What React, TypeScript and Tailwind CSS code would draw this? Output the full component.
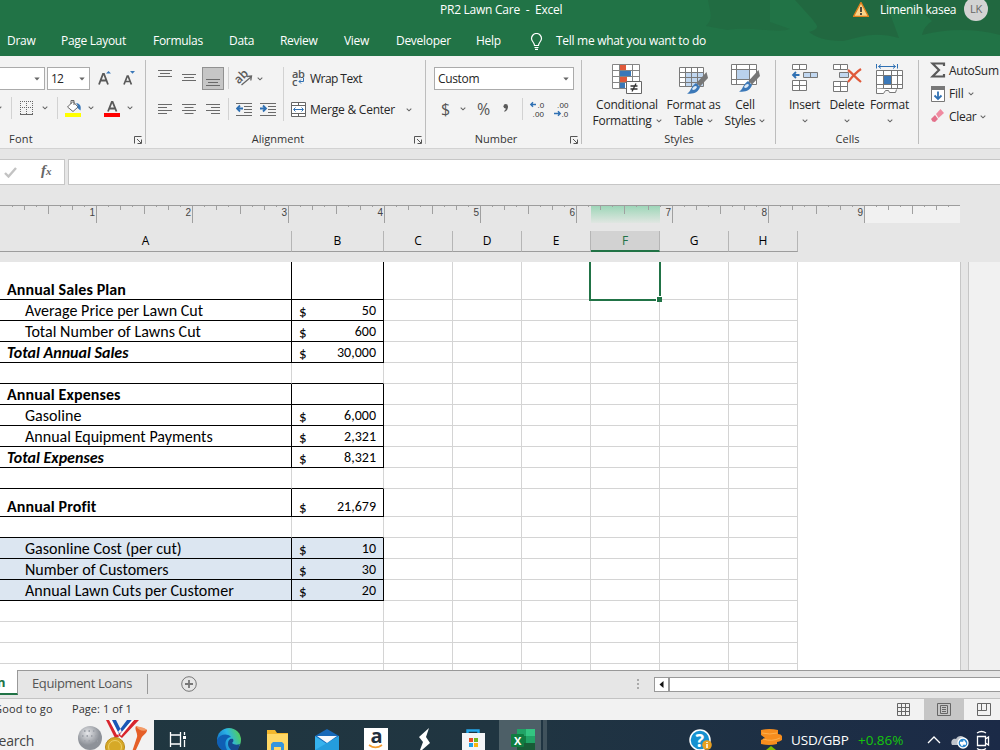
import type { ReactNode } from "react";

const tabs = ["Draw", "Page Layout", "Formulas", "Data", "Review", "View", "Developer", "Help"];

type Row = {
  label?: string;
  value?: string;
  kind?: "bold" | "total" | "item";
  fill?: boolean;
  height?: string;
  box?: boolean;
  under?: boolean;
};

const rows: Row[] = [
  { label: "Annual Sales Plan", kind: "bold", height: "h-[38px]", box: true },
  { label: "Average Price per Lawn Cut", value: "50", kind: "item", box: true },
  { label: "Total Number of Lawns Cut", value: "600", kind: "item", box: true },
  { label: "Total Annual Sales", value: "30,000", kind: "total", box: true },
  { under: true },
  { label: "Annual Expenses", kind: "bold", box: true },
  { label: "Gasoline", value: "6,000", kind: "item", box: true },
  { label: "Annual Equipment Payments", value: "2,321", kind: "item", box: true },
  { label: "Total Expenses", value: "8,321", kind: "total", box: true },
  { under: true },
  { label: "Annual Profit", value: "21,679", kind: "bold", height: "h-[28px]", box: true },
  { under: true },
  { label: "Gasonline Cost (per cut)", value: "10", kind: "item", box: true, fill: true },
  { label: "Number of Customers", value: "30", kind: "item", box: true, fill: true },
  { label: "Annual Lawn Cuts per Customer", value: "20", kind: "item", box: true, fill: true },
  {},
  {},
  {},
  {},
];

const labelStyle = {
  bold: "pl-[7px] font-bold tracking-[0.1px]",
  total: "pl-[7px] font-bold italic",
  item: "pl-[25px] tracking-[0.03px]",
};

function Chevron({ className = "" }: { className?: string }) {
  return (
    <svg viewBox="0 0 6 4" className={`h-1 w-1.5 shrink-0 ${className}`} fill="none" stroke="#666" strokeWidth="1.1">
      <path d="M.7.7 3 2.800 5.300.7" />
    </svg>
  );
}

function Caret({ className = "" }: { className?: string }) {
  return (
    <svg viewBox="0 0 6 4" className={`h-1 w-1.5 shrink-0 ${className}`} fill="#666">
      <path d="M.3.5h5.400L3 3.500z" />
    </svg>
  );
}

function Sep({ className = "" }: { className?: string }) {
  return <div className={`h-[22px] w-px shrink-0 bg-[#d2d2d2] ${className}`} />;
}

function Lines({ d, className = "" }: { d: string; className?: string }) {
  return (
    <svg viewBox="0 0 14 24" className={`h-6 w-3.5 shrink-0 ${className}`} stroke="#6a6a6a" fill="none">
      <path d={d} />
    </svg>
  );
}

function Launcher() {
  return (
    <svg viewBox="0 0 8 8" className="absolute right-1 bottom-1 h-2 w-2" fill="none" stroke="#555">
      <path d="M.5 7.500V.5H7.500M3 3l4 4M7.500 3.500v4h-4" />
    </svg>
  );
}

function Group({ label, width, launcher, children }: { label: string; width: string; launcher?: boolean; children: ReactNode }) {
  return (
    <div className={`relative flex shrink-0 flex-col ${width}`}>
      <div className="h-[75px]">{children}</div>
      <div className="flex h-[19px] items-center justify-center text-[11px] text-[#333]">{label}</div>
      {launcher && <Launcher />}
      <div className="absolute top-1 right-0 h-[84px] w-px bg-[#bdbdbd]" />
    </div>
  );
}

function FontGroup() {
  return (
    <div className="relative flex w-[146px] shrink-0 flex-col">
      <div className="mt-[11px] flex h-6">
        <div className="flex h-[23px] w-[45px] items-center justify-end border border-l-0 border-[#ababab] bg-white pr-1">
          <Caret />
        </div>
        <div className="ml-0.5 flex h-[23px] w-[43px] items-center justify-between border border-[#ababab] bg-white pr-1 pl-[3px]">
          <span className="tracking-[-0.8px]">12</span>
          <Caret />
        </div>
        <svg viewBox="0 0 14 20" className="ml-2 h-5 w-3.5" fill="none">
          <path d="M1 17.500 5 7h1l4 10.500M2.500 13.500h6" stroke="#595959" strokeWidth="1.8" />
          <path d="M8 6.500 10.500 4 13 6.500z" fill="#3b78b8" />
        </svg>
        <svg viewBox="0 0 14 20" className="ml-[11px] h-5 w-3.5" fill="none">
          <path d="M1 17.500 4.300 9h.8l3.300 8.500M2.300 14.500h5" stroke="#595959" strokeWidth="1.700" />
          <path d="M7 4h5l-2.500 2.700z" fill="#3b78b8" />
        </svg>
      </div>
      <div className="mt-[6px] flex h-6 items-center">
        <Chevron className="-ml-1" />
        <Sep className="ml-[9px]" />
        <svg viewBox="0 0 14 14" className="ml-2 h-3.5 w-3.5" stroke="#666" fill="none" shapeRendering="crispEdges">
          <path d="M0 .5h14M0 6.500h14M.5 0v14M6.500 0v14M12.500 0v14" strokeDasharray="1 1" />
          <path d="M0 13.500h13" />
        </svg>
        <Chevron className="ml-2" />
        <Sep className="ml-[9px]" />
        <svg viewBox="0 0 18 18" className="ml-[7px] h-[18px] w-[18px]" fill="none">
          <path d="m2.500 8 5.500-5.500L13 8l-5 4.500zM6 5V1.500h3V6" stroke="#666" fill="#fff" />
          <path d="M11 4c4 .5 5.500 3 4.500 7.500L12.500 9c.5-2 0-3-1.500-5z" fill="#3b78b8" />
          <path d="M0 14h16v4H0z" fill="#ff0" />
        </svg>
        <Chevron className="ml-[5px]" />
        <svg viewBox="0 0 16 18" className="ml-[10px] h-[18px] w-4" fill="none">
          <path d="M4 12.500 7.800 3h.8l3.900 9.500M5.300 9.500h6" stroke="#595959" strokeWidth="1.800" />
          <path d="M0 14h16v4H0z" fill="#f00" />
        </svg>
        <Chevron className="ml-[7px]" />
      </div>
      <div className="mt-[10px] flex h-[19px] items-center pl-[9px] text-[11px] tracking-[0.25px] text-[#333]">Font</div>
      <Launcher />
      <div className="absolute top-1 right-0 h-[84px] w-px bg-[#bdbdbd]" />
    </div>
  );
}

function AlignmentGroup() {
  return (
    <Group label="Alignment" width="w-[280px] [&>div:nth-child(2)]:pr-4" launcher>
      <div className="flex pt-[11px] pl-3">
        <div className="w-[125px]">
          <div className="flex h-6">
            <Lines d="M0 3.500h14M2 6.500h10M0 9.500h14" />
            <Lines className="ml-2.5" d="M0 7.500h14M2 10.500h10M0 13.500h14" />
            <div className="ml-1.5 h-[23px] w-[22px] border border-[#919191] bg-[#c6c6c6]">
              <Lines className="ml-[3px] -mt-px" d="M0 12.500h14M2 15.500h10M0 18.500h14" />
            </div>
            <Sep className="ml-1" />
            <svg viewBox="0 0 18 18" className="mt-0.5 ml-[7px] h-[18px] w-[18px] overflow-visible">
              <text x="-1.500" y="11" transform="rotate(-45 6 8)" fontSize="12" fontWeight="600" fill="#595959">ab</text>
              <path d="m5.500 16 9.500-8M11 7.500l4.500-.5-.7 4.500" fill="none" stroke="#666" strokeWidth="1.300" />
            </svg>
            <Chevron className="mt-2.5 ml-[3px]" />
          </div>
          <div className="mt-[6px] flex h-6 items-center">
            <Lines d="M0 7.500h14M0 10.500h9M0 13.500h14M0 16.500h9" />
            <Lines className="ml-2.5" d="M0 7.500h14M2.500 10.500h9M0 13.500h14M2.500 16.500h9" />
            <Lines className="ml-2.5" d="M0 7.500h14M5 10.500h9M0 13.500h14M5 16.500h9" />
            <Sep className="ml-2" />
            <svg viewBox="0 0 16 14" className="-mt-px ml-[7px] h-3.5 w-4" fill="none" stroke="#6a6a6a">
              <path d="M0 1.500h16M8 4.500h8M8 7.500h8M8 10.500h8M0 13.500h16" />
              <path d="M7 6.500H1.500M4 3.500l-3 3 3 3" stroke="#2f70b3" strokeWidth="1.800" />
            </svg>
            <svg viewBox="0 0 16 14" className="-mt-px ml-2 h-3.5 w-4" fill="none" stroke="#6a6a6a">
              <path d="M0 1.500h16M8 4.500h8M8 7.500h8M8 10.500h8M0 13.500h16" />
              <path d="M0 6.500h5.500M3 3.500l3 3-3 3" stroke="#2f70b3" strokeWidth="1.800" />
            </svg>
          </div>
        </div>
        <div className="h-[54px] w-px bg-[#d2d2d2]" />
        <div className="pl-[7px]">
          <div className="flex h-6 items-center">
            <div className="relative flex h-[18px] w-3.5 flex-col pl-px text-[11px] leading-[8px] font-semibold tracking-[-0.5px] text-[#555]">
              <span>ab</span>
              <span>c</span>
              <svg viewBox="0 0 6 6" className="absolute right-px bottom-1 h-1.5 w-1.5" fill="none" stroke="#2f70b3">
                <path d="M5.500 0v3.500H1M3 1.500l-2 2 2 2" />
              </svg>
            </div>
            <span className="ml-[5px] tracking-[-0.55px]">Wrap Text</span>
          </div>
          <div className="mt-[6px] flex h-[25px] items-center">
            <svg viewBox="0 0 15 15" className="h-[15px] w-[15px]" fill="#fff" stroke="#666">
              <path d="M.5.5h14v14H.5zM.5 3.500h14M.5 11.500h14M7.500.5v3M7.500 11.500v3" />
              <path d="M3 7.500h9M4.500 5.500l-2 2 2 2M10.500 5.500l2 2-2 2" fill="none" stroke="#2f70b3" />
            </svg>
            <span className="ml-1 w-[85px] pt-px tracking-[-0.23px] whitespace-nowrap">Merge &amp; Center</span>
            <Chevron className="ml-[11px]" />
          </div>
        </div>
      </div>
    </Group>
  );
}

function NumberGroup() {
  return (
    <Group label="Number" width="w-[156px] [&>div:nth-child(2)]:pr-4" launcher>
      <div className="px-2 pt-[11px]">
        <div className="flex h-[23px] w-[140px] items-center justify-between border border-[#ababab] bg-white pr-1 pl-[3px]">
          <span className="tracking-[-0.35px]">Custom</span>
          <Caret />
        </div>
        <div className="mt-[7px] flex h-6 items-center pl-[7px] text-[#555]">
          <span className="w-[11px] text-[16px]">$</span>
          <Chevron className="ml-2" />
          <span className="ml-[11px] w-[14px] text-[16px] tracking-[-0.5px]">%</span>
          <svg viewBox="0 0 6 8" className="-mt-0.5 ml-3 h-2 w-1.5" fill="#5a5a5a">
            <circle cx="2.700" cy="2.300" r="2.200" />
            <path d="M4.900 2c.3 3-1 5-3.400 5.800l-.4-.8C2.500 6 3 5 2.800 3.500z" />
          </svg>
          <Sep className="ml-[13px]" />
          <svg viewBox="0 0 16 18" className="ml-[7px] h-[18px] w-4 overflow-visible font-['Liberation_Sans',sans-serif]" fill="#333" fontSize="8">
            <text x="7.500" y="8">.0</text>
            <text x="2.500" y="17" textLength="11.500">.00</text>
            <path d="M6 4.500H1M3 2.200.8 4.500 3 6.800" fill="none" stroke="#2f70b3" strokeWidth="1.400" />
          </svg>
          <svg viewBox="0 0 16 18" className="ml-2 h-[18px] w-4 overflow-visible font-['Liberation_Sans',sans-serif]" fill="#333" fontSize="8">
            <text x="3" y="8" textLength="11.500">.00</text>
            <text x="7.500" y="17">.0</text>
            <path d="M0 13.500h6M4 11.200l2.200 2.300L4 15.800" fill="none" stroke="#2f70b3" strokeWidth="1.400" />
          </svg>
        </div>
      </div>
    </Group>
  );
}

function Brush() {
  return (
    <>
      <path d="m28.500 8 1.500 6-8 8.500-3.500-3.500z" fill="#777" />
      <path d="m18 19 4 4c-1.500 5-6 7.500-13 6.500 4-1.500 3.500-7 9-10.500z" fill="#3b78b8" />
      <path d="M14 25c1-2 2-3 4-3l1 1c-1 2-2 3-4 3z" fill="#dce9f6" />
    </>
  );
}

function BigButton({ icon, lines, width }: { icon: ReactNode; lines: [string, string?]; width: string }) {
  return (
    <div className={`flex shrink-0 flex-col items-center ${width}`}>
      <div className="h-[33px]">{icon}</div>
      <span className="h-4 text-center leading-4 tracking-[-0.2px] whitespace-nowrap">{lines[0]}</span>
      <span className="flex h-4 items-center gap-1 leading-4 tracking-[-0.25px] whitespace-nowrap">
        {lines[1]}
        <Chevron />
      </span>
    </div>
  );
}

function StylesGroup() {
  return (
    <Group label="Styles" width="w-[194px]">
      <div className="flex pt-2 pl-[7px]">
        <BigButton
          width="w-[76px]"
          lines={["Conditional", "Formatting"]}
          icon={
            <svg viewBox="0 0 30 31" className="h-[31px] w-[30px]" fill="#fff" stroke="#858585">
              <path d="M.5.5h27v24H.5z" />
              <path d="M8 1h6v6H8zM8 13h7v6H8z" fill="#e0593a" stroke="none" />
              <path d="M8 7h11v6H8zM8 19h5v5H8z" fill="#3b78b8" stroke="none" />
              <path d="M.5 6.500h27M.5 12.500h27M.5 18.500h27M7.500.5v24M20.500.5v24" fill="none" />
              <path d="M14.500 17.500h15v12h-15z" stroke="#666" />
              <path d="M18.500 22h7M18.500 25h7M24 19.500l-4 8" stroke="#333" fill="none" strokeWidth="1.300" />
            </svg>
          }
        />
        <BigButton
          width="w-[57px]"
          lines={["Format as", "Table"]}
          icon={
            <svg viewBox="0 0 31 31" className="h-[31px] w-[31px]" fill="#fff" stroke="#7a7a7a">
              <path d="M1.500 3.500h24v19h-24z" />
              <path d="M8 9h17v13H8z" fill="#c1d7f0" stroke="none" />
              <path d="M1.500 8.500h24M1.500 13.500h24M1.500 18.500h24M7.500 3.500v19M13.500 3.500v19M19.500 3.500v19" fill="none" />
              <g stroke="none"><Brush /></g>
            </svg>
          }
        />
        <BigButton
          width="w-[46px]"
          lines={["Cell", "Styles"]}
          icon={
            <svg viewBox="0 0 31 31" className="h-[31px] w-[31px]" fill="#fff" stroke="#7a7a7a">
              <path d="M1.500.5h25v20h-25zM1.500 5.500h25M1.500 15.500h25M6.500.5v20M19.500.5v20" />
              <path d="M7 6h12v9H7z" fill="#b9d1ec" stroke="none" />
              <g stroke="none" transform="translate(0 -2)"><Brush /></g>
            </svg>
          }
        />
      </div>
    </Group>
  );
}

function CellsGroup() {
  return (
    <Group label="Cells" width="w-[143px]">
      <div className="flex pt-2 pl-[7px]">
        <BigButton
          width="w-[43px]"
          lines={["Insert"]}
          icon={
            <svg viewBox="0 0 28 30" className="h-[30px] w-7" fill="#fff" stroke="#777">
              <path d="M1.500.5h14v5h-14zM8.500.5v5M1.500 16.500h14v10h-14zM1.500 21.500h14M8.500 16.500v10" />
              <path d="M12.500 8.500h14v5h-14zM19.500 8.500v5" fill="#c1d7f0" />
              <path d="M8.500 11H2M5 8l-3 3 3 3" fill="none" stroke="#2f70b3" strokeWidth="1.800" />
            </svg>
          }
        />
        <BigButton
          width="w-[42px]"
          lines={["Delete"]}
          icon={
            <svg viewBox="0 0 30 30" className="h-[30px] w-[30px]" fill="#fff" stroke="#777">
              <path d="M1.500.5h14v5h-14zM8.500.5v5M1.500 17.500h14v10h-14zM1.500 22.500h14M8.500 17.500v10" />
              <path d="M7.500 8.500h9v5h-9z" fill="#c1d7f0" />
              <path d="M16 6c4 3 8 8 13 12M29 5c-6 4-9 8-13 13" fill="none" stroke="#e0593a" strokeWidth="2.200" />
            </svg>
          }
        />
        <BigButton
          width="w-[43px]"
          lines={["Format"]}
          icon={
            <svg viewBox="0 0 30 31" className="h-[31px] w-[30px]" fill="#fff" stroke="#777">
              <path d="M1.500 6.500h26v18h-26zM1.500 11.500h26M1.500 20.500h26M8.500 6.500v18M16.500 6.500v18M22.500 6.500v18" />
              <path d="M1.500 24.500v5h7l2-3h3l1 2h6l1-3" />
              <path d="M9 12h7v8H9z" fill="#3b78b8" stroke="none" />
              <path d="M1.500-.5v5M22.500-.5v5M3.500 2.500h17M6 .5l-2.500 2L6 4.500M18 .5l2.500 2-2.500 2" fill="none" stroke="#2f70b3" />
            </svg>
          }
        />
      </div>
    </Group>
  );
}

function EditingGroup() {
  return (
    <div className="w-[81px] overflow-hidden pt-[3px] pl-[11px] whitespace-nowrap">
      <div className="flex h-[23px] items-center">
        <svg viewBox="0 0 16 16" className="-mt-0.5 h-4 w-4 shrink-0" fill="none" stroke="#595959" strokeWidth="2.200">
          <path d="M14 4V1.500H2.500L9 8l-6.500 6.500H14V12" />
        </svg>
        <span className="ml-[3px] tracking-[-0.25px]">AutoSum</span>
      </div>
      <div className="flex h-[23px] items-center">
        <svg viewBox="0 0 15 16" className="ml-px h-4 w-[15px]" fill="#fff" stroke="#777">
          <path d="M.5.5h13v15H.5z" />
          <path d="M0 0h14v4H0z" fill="#777" stroke="none" />
          <path d="M7 5.500v7.500M3.500 9.500 7 13l3.500-3.500" fill="none" stroke="#2f70b3" strokeWidth="1.800" />
        </svg>
        <span className="ml-[3px] tracking-[-0.2px]">Fill</span>
        <Chevron className="ml-[5px]" />
      </div>
      <div className="flex h-[23px] items-center">
        <svg viewBox="0 0 15 14" className="-mt-px ml-px h-3.5 w-[15px]">
          <path d="m5 5 4.500-5L13 4 7.500 9z" fill="#ef8aa0" />
          <path d="m4 6 3 4-3 3-2.500-.5L0 10z" fill="#e3708a" />
        </svg>
        <span className="ml-[3px] tracking-[-0.3px]">Clear</span>
        <Chevron className="ml-1" />
      </div>
    </div>
  );
}

function TitleArea() {
  return (
    <header className="relative h-14 bg-[#217346] text-white">
      <svg viewBox="0 0 300 56" className="absolute top-0 right-0 h-14 w-[300px]" fill="#21673f">
        <path d="M8 0h62v22l20 7c-12 5-40-3-62 1l-22-4c8-8 4-14 2-26z" opacity=".6" />
        <path d="M95 0h90l14 38c-26-7-36-1-56 3-18 0-28-4-34-9 14-4 6-8 4-12z" opacity=".9" />
        <path d="M208 0h92v35c-24-6-50-7-78 0 2-8 6-11 10-14z" opacity=".9" />
      </svg>
      <div className="relative flex h-5 items-center">
        <span className="ml-[440px] w-[413px] tracking-[-0.25px] whitespace-pre">PR2 Lawn Care  -  Excel</span>
        <svg viewBox="0 0 16 15" className="-mt-0.5 h-[15px] w-4">
          <path d="M8 .5 15.500 14.500H.5z" fill="#f9d48a" stroke="#e0811d" strokeWidth="1.400" />
          <path d="M8 5v5M8 11v2" stroke="#333" strokeWidth="1.700" />
        </svg>
        <span className="ml-[11px] w-[75px] tracking-[-0.3px] whitespace-nowrap">Limenih kasea</span>
        <div className="-mt-0.5 ml-[9px] flex h-6 w-6 items-center justify-center rounded-full bg-[#d3d3d3] text-[11px] tracking-[-0.2px] text-[#666]">
          LK
        </div>
      </div>
      <nav className="relative grid h-[42px] grid-cols-[54px_92px_76px_51px_64px_52px_80px_54px_26px_1fr] items-center pl-[7px] tracking-[-0.29px] whitespace-nowrap">
        {tabs.map((tab) => (
          <span key={tab}>{tab}</span>
        ))}
        <svg viewBox="0 0 13 17" className="h-[17px] w-[13px]" fill="none" stroke="#fff" strokeWidth="1.200">
          <path d="M4.500 12.500c0-3-3-4-3-7a5 5 0 0 1 10 0c0 3-3 4-3 7zM4.500 14.500h4M5 16.300h3" />
        </svg>
        <span>Tell me what you want to do</span>
      </nav>
    </header>
  );
}

function FormulaBar() {
  return (
    <div className="flex h-[26px]">
      <div className="flex w-[65px] items-center border border-l-0 border-[#c6c6c6] bg-white">
        <svg viewBox="0 0 13 11" className="ml-1 h-[11px] w-[13px]" fill="none" stroke="#c3c3c3" strokeWidth="2.400">
          <path d="m1 6 3.500 3.500L12 1" />
        </svg>
        <span className="-mt-1 ml-6 font-['Liberation_Serif',serif] text-[15px] font-bold text-[#666] italic">
          f<span className="text-[11px]">x</span>
        </span>
      </div>
      <div className="ml-[3px] flex-1 border border-r-0 border-[#c6c6c6] bg-white" />
    </div>
  );
}

function Ruler() {
  return (
    <div className="relative flex h-[18px] w-[960px] border-t border-[#9d9d9d]">
      <div className="absolute top-0 left-[591px] h-[17px] w-[69px] bg-linear-to-b from-[#9dd6b8] to-[#e0e6e2]" />
      <div className="absolute top-0 left-[865px] h-[17px] w-[95px] bg-[#f1f1f1]" />
      {Array.from({ length: 80 }, (_, i) => i + 1).map((n) => (
        <div key={n} className="relative flex w-3 translate-x-px justify-end">
          {n % 8 === 0 && n < 80 && (
            <span className="absolute right-0.5 font-['Liberation_Sans',sans-serif] text-[10px] leading-[13px] text-[#444]">{n / 8}</span>
          )}
          <div
            className={`w-px shrink-0 bg-[#a0a0a0] ${
              n === 80 ? "h-0" : n % 8 === 0 ? "h-[17px]" : n % 4 === 0 ? "h-2" : n % 2 === 0 ? "h-1" : "h-px"
            }`}
          />
        </div>
      ))}
    </div>
  );
}

const columns = "grid grid-cols-[292px_92px_repeat(6,69px)]";

function ColumnHeads() {
  return (
    <div className={`${columns} mt-2 h-5 w-[798px] text-center leading-[19px] text-black`}>
      {"ABCDEFGH".split("").map((c) => (
        <div
          key={c}
          className={
            c === "F"
              ? "border-r border-b-2 border-r-[#b5b5b5] border-b-[#217346] bg-[#d2d2d2] text-[#217346]"
              : "border-r border-b border-r-[#b5b5b5] border-b-[#9d9d9d]"
          }
        >
          {c}
        </div>
      ))}
    </div>
  );
}

function Sheet() {
  return (
    <div className="mt-[11px] flex h-[408px]">
      <div className="h-full w-[961px] overflow-hidden border-r border-[#c6c6c6] bg-white font-[Carlito,Lato,sans-serif] text-[16px] text-black">
        {rows.map((row, i) => {
          const fill = row.fill ? "bg-[#dce6f1]" : "";
          const edge = row.box ? "border-black" : row.under ? "border-r-[#d4d4d4] border-b-black" : "border-[#d4d4d4]";
          return (
            <div key={i} className={`${columns} ${row.height ?? "h-[21px]"} w-[798px]`}>
              <div className={`flex items-end border-r border-b leading-[18px] whitespace-nowrap ${edge} ${fill} ${row.kind ? labelStyle[row.kind] : ""}`}>
                {row.label}
              </div>
              <div className={`flex items-end justify-between border-r border-b pr-[7px] pl-[7px] leading-[18px] ${edge} ${fill}`}>
                {row.value && (
                  <>
                    <span className="text-[15px]">$</span>
                    <span className="text-[14px]">{row.value}</span>
                  </>
                )}
              </div>
              {["C", "D", "E", "F", "G", "H"].map((c) => (
                <div key={c} className="relative border-r border-b border-[#d4d4d4]">
                  {c === "F" && i === 0 && (
                    <div className="absolute top-0 -right-0.5 -bottom-0.5 -left-0.5 z-10 border-2 border-t-0 border-[#217346]">
                      <div className="absolute -right-[3px] -bottom-[3px] h-1.5 w-1.5 border-t border-l border-white bg-[#217346]" />
                    </div>
                  )}
                </div>
              ))}
            </div>
          );
        })}
      </div>
      <div className="w-2 border-r border-[#c6c6c6]" />
      <div className="flex-1 bg-[#f1f1f1]" />
    </div>
  );
}

function SheetTabs() {
  return (
    <div className="flex h-[29px] border-t border-b border-t-[#999] border-b-[#c3c3c3]">
      <div className="-mt-px flex h-[25px] w-[18px] items-center overflow-hidden border-r border-b-2 border-r-[#999] border-b-[#217346] bg-white text-[13px] font-bold text-[#217346]">
        <span className="-ml-[3px]">n</span>
      </div>
      <span className="ml-3.5 w-[115px] text-[13px] leading-[25px] tracking-[-0.38px] whitespace-nowrap text-[#555]">Equipment Loans</span>
      <div className="mt-[3px] h-5 w-px bg-[#999]" />
      <svg viewBox="0 0 16 16" className="mt-[5px] ml-[33px] h-4 w-4" fill="none" stroke="#777">
        <circle cx="8" cy="8" r="7.300" />
        <path d="M8 4v8M4 8h8" strokeWidth="1.800" />
      </svg>
      <div className="mt-2 ml-[440px] flex h-2.5 w-0.5 flex-col justify-between">
        <div className="h-0.5 bg-[#aaa]" />
        <div className="h-0.5 bg-[#aaa]" />
        <div className="h-0.5 bg-[#aaa]" />
      </div>
      <div className="mt-1.5 ml-[15px] flex h-[15px] flex-1 border border-r-0 border-[#999] bg-white">
        <svg viewBox="0 0 13 13" className="h-[13px] w-[13px]">
          <path d="M8.500 3v7l-4-3.500z" fill="#111" />
        </svg>
        <div className="w-0.5 bg-[#999]" />
      </div>
    </div>
  );
}

function StatusBar() {
  return (
    <div className="flex h-[21px] items-center bg-[#f2f2f2] text-[11px] text-[#333]">
      <span className="-ml-[6px] w-[78px] pb-px tracking-[0.2px] whitespace-nowrap">Good to go</span>
      <span className="w-[823px] pb-px tracking-[0.05px]">Page: 1 of 1</span>
      <svg viewBox="0 0 13 13" className="ml-[2px] h-[13px] w-[13px]" fill="none" stroke="#666">
        <path d="M.5.5h12v12H.5zM.5 4.500h12M.5 8.500h12M4.500.5v12M8.500.5v12" />
      </svg>
      <div className="ml-[14px] flex h-[21px] w-10 items-center justify-center bg-[#c6c6c6]">
        <svg viewBox="0 0 14 13" className="h-[13px] w-3.5" fill="none" stroke="#666">
          <path d="M.5.5h13v12H.5zM3.500 2.500h7v8h-7zM5 4.500h4M5 6.500h4M5 8.500h4" />
        </svg>
      </div>
      <svg viewBox="0 0 14 13" className="ml-[13px] h-[13px] w-3.5" fill="none" stroke="#666">
        <path d="M.5.5h13v12H.5zM4.500.5v7M9.500.5v7M.5 7.500h9" />
      </svg>
    </div>
  );
}

function Taskbar() {
  return (
    <div className="flex h-[30px] overflow-hidden bg-linear-to-r from-[#203740] via-[#203541] to-[#1b2a47] text-white">
      <div className="flex w-[154px] bg-[#f2f2f2] text-[#444]">
        <span className="-ml-[9px] w-[87px] pt-[13px] text-[14px] tracking-[-0.2px]">Search</span>
        <svg viewBox="0 0 76 30" className="h-[30px] w-[76px] shrink-0">
          <defs>
            <radialGradient id="ball" cx=".4" cy=".3">
              <stop offset="0" stopColor="#e6e7ea" />
              <stop offset="1" stopColor="#8e9299" />
            </radialGradient>
          </defs>
          <circle cx="12" cy="18" r="12" fill="url(#ball)" />
          <path d="M6 11h13M4 16h17M6 21h14" stroke="#a0a4ab" strokeWidth="2" strokeDasharray="1.500 3" />
          <path d="m28 0 9 18 4-1L32 0zM61 0 44 18l-4-3L56 0z" fill="#d8262e" />
          <path d="m31 0 8 15 2-2-6-13z" fill="#fff" />
          <path d="m34 0 7 14 3-2-6-12zM54 0 43 14l-3-2L49 0z" fill="#1b57b5" />
          <path d="M56 0 43 16l-1-2L54 0z" fill="#fff" />
          <circle cx="37" cy="27" r="9.500" fill="#d6a927" stroke="#b98916" />
          <circle cx="37" cy="27" r="6.500" fill="none" stroke="#eed06a" />
          <path d="M58 6c5 3 5 1 11 4 0 4-5 5-6 9l-6 13h-3l5-15c1-4-3-7-1-11z" fill="#e55f28" />
          <path d="M58 6c4 1 8 1 11 4-4 2-9 0-11-4z" fill="#f39b68" />
        </svg>
      </div>
      <svg viewBox="0 0 346 30" className="h-[30px] w-[346px] shrink-0">
        <defs>
          <linearGradient id="edge" x1="0" y1=".6" x2="1" y2=".2">
            <stop offset="0" stopColor="#1273c6" />
            <stop offset=".5" stopColor="#2bb4e6" />
            <stop offset="1" stopColor="#57d04b" />
          </linearGradient>
        </defs>
        <path d="M16.500 12v3h10v-3M16.500 27v-3h10v3M16.500 15v9M26.500 15v9M30.500 12v3M30.500 20v7" fill="none" stroke="#fff" strokeWidth="1.300" />
        <path d="M29 16h3v3h-3z" fill="#fff" />
        <circle cx="75" cy="20" r="12" fill="url(#edge)" />
        <path d="M63 20c3-6 10-7 14-3-6 1-7 7-4 13h-5c-4-3-5-6-5-10z" fill="#0f5fb4" />
        <path d="M74 24c0-4 2-6 5-5 1 2 0 3-1 4 2 2 5 2 8 1l-2 6h-7c-2-2-3-4-3-6z" fill="#16498f" />
        <path d="M113 10h8l2 3h11v17h-21z" fill="#f3b72d" />
        <path d="M113 14h21v16h-21z" fill="#ffd765" />
        <path d="M117 30v-6l2-2h9l2 2v6z" fill="#3595dc" />
        <path d="M120 27h7v3h-7z" fill="#ffd765" />
        <path d="m161 16 12-7 12 7v14h-24z" fill="#1668b8" />
        <path d="m161 16 12 8 12-8v14h-24z" fill="#35b2ee" />
        <path d="m161 30 24-14v14z" fill="#249ddd" />
        <path d="M163 16h20l-10 7z" fill="#f5f8fc" />
        <path d="M210 8h24v22h-24z" fill="#fff" />
        <text x="216.500" y="23" fontSize="20" fontWeight="700" fill="#222e3c">a</text>
        <path d="M215 25c4 3 9 3 13 0" fill="none" stroke="#f59c2d" strokeWidth="1.600" />
        <path d="m275 8-10 9 4 5-3 8h2l8-7-4-6z" fill="#fff" />
        <path d="M313.500 14v-3.500h11V14" fill="none" stroke="#24a7ea" strokeWidth="2.400" />
        <path d="M308 13h23v17h-23z" fill="#f4f5f7" />
        <path d="M315 18h4v4h-4z" fill="#e94c26" />
        <path d="M320 18h4v4h-4z" fill="#72b71f" />
        <path d="M315 23h4v4h-4z" fill="#1ea2e8" />
        <path d="M320 23h4v4h-4z" fill="#fbb70d" />
      </svg>
      <div className="-ml-px w-[42px] bg-[#4d5f67]">
        <svg viewBox="0 0 42 30" className="h-[30px] w-[42px]">
          <path d="M18 9h18v21H18z" fill="#21a366" />
          <path d="M27 9h9v7h-9z" fill="#33c481" />
          <path d="M18 16h9v7h-9z" fill="#107c41" />
          <path d="M27 23h9v7h-9zM18 23h9v7h-9z" fill="#185c37" />
          <rect x="12" y="14" width="13" height="13" rx="1" fill="#107c41" />
          <text x="15" y="24.500" fontSize="11" fontWeight="700" fill="#fff">X</text>
        </svg>
      </div>
      <div className="ml-0.5 w-1 bg-[#40525c]" />
      <div className="flex flex-1 pl-[142px]">
        <svg viewBox="0 0 24 30" className="h-[30px] w-6">
          <circle cx="11" cy="20" r="10" fill="#1691d0" stroke="#fff" strokeWidth="1.500" />
          <text x="6.500" y="27" fontSize="18" fontWeight="700" fill="#fff">?</text>
          <circle cx="18" cy="25" r="4.800" fill="#e9a020" />
          <path d="M18 22v1M18 24v4" stroke="#fff" strokeWidth="1.500" />
        </svg>
        <svg viewBox="0 0 24 30" className="ml-[46px] h-[30px] w-6">
          <path d="M2 10q8-2 17 0v4q3 0 4 2v4q-3 2-5 2v2q-8 2-16 0v-4l4-2-4-3z" fill="#f68d1e" />
          <path d="M3 13q8 2 15 0M4 19q9 3 17-1" fill="none" stroke="#fdb04d" />
          <path d="m12 26 5 4H7z" fill="#7fba00" />
        </svg>
        <span className="ml-2 w-[67px] pt-[11px] text-[13.500px] leading-[18px] tracking-[-0.15px]">USD/GBP</span>
        <span className="w-[59px] pt-[11px] text-[13.500px] leading-[18px] tracking-[-0.05px] text-[#16c60c]">+0.86%</span>
        <svg viewBox="0 0 76 30" className="h-[30px] w-[76px]" fill="none" stroke="#fff" strokeWidth="1.300">
          <path d="m11 23 6-6 6 6" />
          <path d="M38 25h-3c-2-4 1-7 4-6 2-5 9-3 9 0 3 0 3 3 3 6z" fill="#bfc4cb" stroke="none" />
          <circle cx="46" cy="23" r="5" fill="#2a87cf" />
          <path d="M43 22.500h5l-1.500-2M49 24h-5l1.500 2" />
          <path d="M60.500 16.500h8v9h-8zM68.500 19l3-2v8l-3-2M60 13c3-2 6-2 9 0M60 28.500c3 2 6 2 9 0" />
        </svg>
      </div>
    </div>
  );
}

export default function App() {
  return (
    <div className="flex h-[750px] w-[1000px] flex-col overflow-hidden bg-[#e6e6e6] font-['Open_Sans','Noto_Sans',sans-serif] text-[12px] leading-[16px] text-[#262626]">
      <TitleArea />
      <div className="flex h-[93px] border-b border-[#d2d2d2] bg-[#f3f3f3]">
        <FontGroup />
        <AlignmentGroup />
        <NumberGroup />
        <StylesGroup />
        <CellsGroup />
        <EditingGroup />
      </div>
      <div className="h-2.5" />
      <FormulaBar />
      <div className="h-5" />
      <Ruler />
      <ColumnHeads />
      <Sheet />
      <SheetTabs />
      <StatusBar />
      <Taskbar />
    </div>
  );
}
